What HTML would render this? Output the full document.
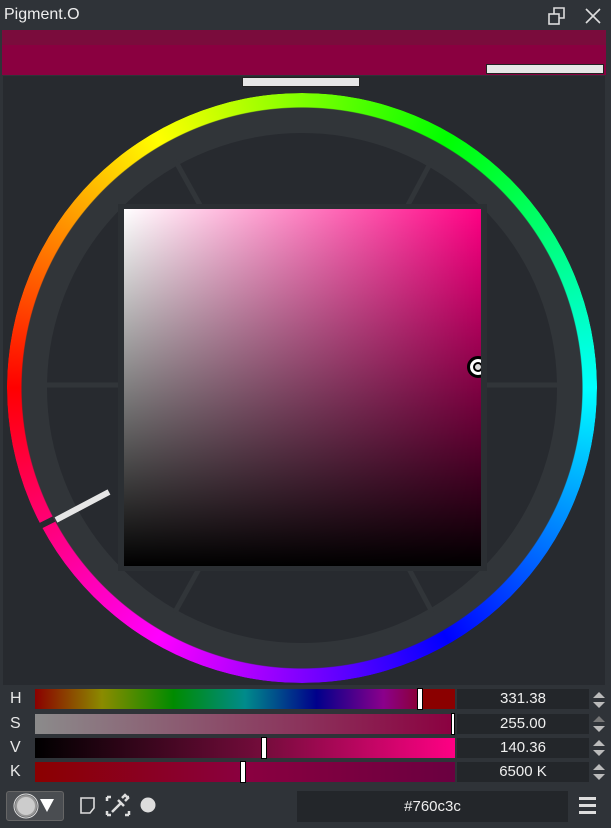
<!DOCTYPE html>
<html><head><meta charset="utf-8"><style>
*{margin:0;padding:0;box-sizing:border-box}
body{width:611px;height:828px;background:#2f3338;font-family:"Liberation Sans",sans-serif;position:relative;overflow:hidden;color:#e8e8e8}
.abs{position:absolute}
.bar{position:absolute;left:35px;width:420px;height:20px}
.val{position:absolute;left:457px;width:132px;height:20px;background:#23262a;font-size:15px;text-align:center;line-height:20px;color:#f0f0f0}
.lbl{position:absolute;left:10px;width:14px;font-size:16px;line-height:20px}
.hnd{position:absolute;top:-1px;width:6px;height:22px;background:#fff;border:1.5px solid #000}
.arr{position:absolute;left:593px;width:0;height:0;border-left:6px solid transparent;border-right:6px solid transparent}
</style></head><body>
<div class="abs" style="left:0;top:0;width:611px;height:29px;background:#2f3338"></div>
<div class="abs" style="left:4px;top:6px;font-size:16px;color:#eee">Pigment.O</div>
<svg class="abs" style="left:545px;top:6px" width="62" height="20" viewBox="0 0 62 20" fill="none" stroke="#ddd" stroke-width="1.6">
<rect x="4" y="8" width="10" height="10"/><path d="M9 8V2h10v10h-5"/><path d="M41 3l14 14M55 3L41 17"/></svg>
<div class="abs" style="left:2px;top:30px;width:604px;height:15px;background:#7a0c3c"></div>
<div class="abs" style="left:2px;top:45px;width:604px;height:30px;background:#8a0040"></div>
<div class="abs" style="left:486px;top:64px;width:118px;height:10px;background:#e6e6e6;border:1px solid #222"></div>
<div class="abs" style="left:3px;top:76px;width:602px;height:609px;background:#272a2f"></div>
<div class="abs" style="left:242px;top:77px;width:118px;height:10px;background:#e6e6e6;border:1px solid #222"></div>
<svg class="abs" style="left:0;top:0" width="611" height="690">
<circle cx="302" cy="388" r="268" fill="none" stroke="#313539" stroke-width="26"/>
<g stroke="#313539" stroke-width="5">
<line x1="45" y1="385" x2="118" y2="385"/><line x1="487" y1="385" x2="560" y2="385"/>
<line x1="175" y1="160" x2="200" y2="205"/><line x1="432" y1="160" x2="408" y2="205"/>
<line x1="175" y1="612" x2="200" y2="567"/><line x1="432" y1="612" x2="408" y2="567"/>
</g>
<rect x="118" y="204" width="369" height="367" fill="#2b2f33"/>
</svg>
<div class="abs" style="left:7px;top:93px;width:590px;height:590px;border-radius:50%;background:conic-gradient(from 270deg,#f00,#ff0,#0f0,#0ff,#00f,#f0f,#f00);-webkit-mask:radial-gradient(circle,transparent 280px,#000 281px);mask:radial-gradient(circle,transparent 280px,#000 281px)"></div>
<div class="abs" style="left:124px;top:209px;width:357px;height:357px;background:linear-gradient(to bottom,rgba(0,0,0,0),#000),linear-gradient(to right,#fff,#ff0084)"></div>
<div class="abs" style="left:467px;top:356px;width:14px;height:22px;overflow:hidden"><div style="width:22px;height:22px;border-radius:50%;background:#ddd;border:3px solid #000;box-shadow:inset 0 0 0 3px #fff,inset 0 0 0 5px #000"></div></div>
<svg class="abs" style="left:0;top:0" width="200" height="560"><line x1="56" y1="520" x2="109" y2="492" stroke="#e6e6e6" stroke-width="6"/><line x1="40" y1="526" x2="54" y2="519" stroke="#272a2f" stroke-width="6"/></svg>
<div class="lbl" style="top:689px">H</div><div class="lbl" style="top:714px">S</div><div class="lbl" style="top:738px">V</div><div class="lbl" style="top:762px">K</div>
<div class="bar" style="top:689px;background:linear-gradient(to right,#8b0000,#8b8b00 16%,#008b00 33%,#008b8b 50%,#00008b 67%,#8b008b 83%,#8b0030 92%,#8b0000 92.1%)"><div class="hnd" style="left:382px"></div></div>
<div class="bar" style="top:714px;background:linear-gradient(to right,#8b8b8b,#8b0040)"><div class="hnd" style="left:416px;width:4px;background:#fff"></div></div>
<div class="bar" style="top:738px;background:linear-gradient(to right,#000,#760c3c 55%,#ff0084)"><div class="hnd" style="left:226px"></div></div>
<div class="bar" style="top:762px;background:linear-gradient(to right,#8b0000,#8a0040 50%,#6a0040)"><div class="hnd" style="left:205px"></div></div>
<div class="val" style="top:689px">331.38</div><div class="val" style="top:714px">255.00</div><div class="val" style="top:738px">140.36</div><div class="val" style="top:762px">6500 K</div>
<div class="arr" style="top:692px;border-bottom:6px solid #bbb"></div><div class="arr" style="top:702px;border-top:6px solid #bbb"></div>
<div class="arr" style="top:716px;border-bottom:6px solid #777"></div><div class="arr" style="top:726px;border-top:6px solid #bbb"></div>
<div class="arr" style="top:740px;border-bottom:6px solid #bbb"></div><div class="arr" style="top:750px;border-top:6px solid #bbb"></div>
<div class="arr" style="top:764px;border-bottom:6px solid #bbb"></div><div class="arr" style="top:774px;border-top:6px solid #bbb"></div>
<div class="abs" style="left:6px;top:791px;width:58px;height:30px;background:#4a4d51;border:1px solid #666;border-radius:3px"></div>
<svg class="abs" style="left:0;top:785px" width="611" height="43">
<circle cx="26" cy="21" r="10" fill="#ccc" stroke="#999" stroke-width="2"/><circle cx="26" cy="21" r="12" fill="none" stroke="#ddd" stroke-width="1"/>
<path d="M40 14h14l-7 13z" fill="#fff"/>
<path d="M81 13h13v10l-4 5h-9z" fill="none" stroke="#ddd" stroke-width="1.6"/>
<path d="M107 12h4M107 12v4M129 12h-2M129 30h-4M129 30v-4M107 30v-4M107 30h4" stroke="#ddd" stroke-width="2.5" fill="none"/>
<path d="M112 27l9-9M118 15l6 6M122 13l3-3 3 3-3 3" stroke="#ddd" stroke-width="2.5" fill="none"/>
<circle cx="148" cy="20" r="7.5" fill="#ddd"/>
<rect x="579" y="12" width="17" height="3" fill="#ddd"/><rect x="579" y="19" width="17" height="3" fill="#ddd"/><rect x="579" y="26" width="17" height="3" fill="#ddd"/>
</svg>
<div class="abs" style="left:297px;top:791px;width:271px;height:31px;background:#23262a;font-size:15px;text-align:center;line-height:31px;color:#eee">#760c3c</div>
</body></html>
